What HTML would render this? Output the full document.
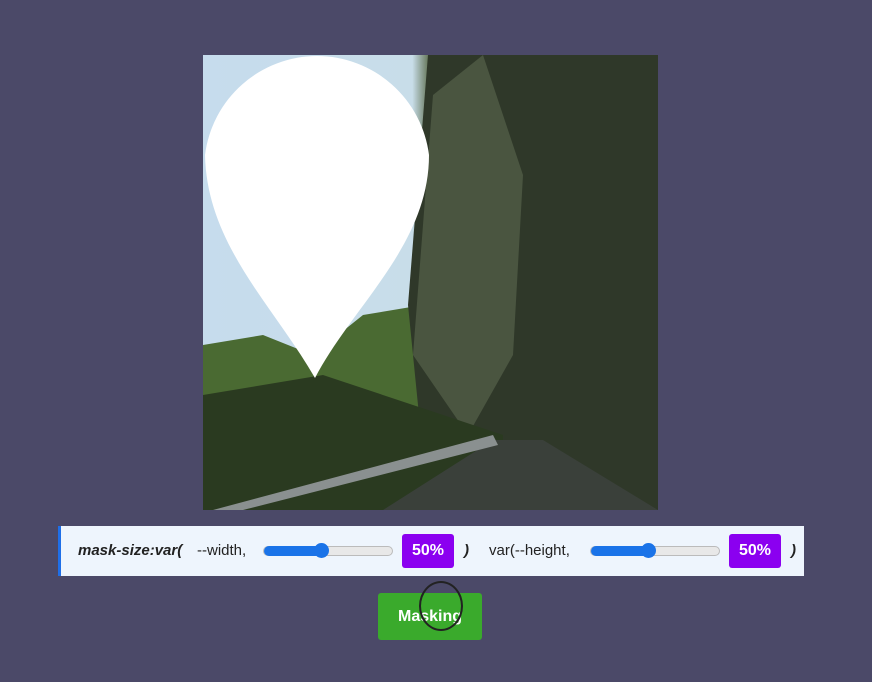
<!DOCTYPE html>
<html><head><style>
body{margin:0;width:872px;height:682px;background:#4b4968;position:relative;overflow:hidden;font-family:"Liberation Sans",sans-serif}
#img{position:absolute;left:203px;top:55px;width:455px;height:455px;overflow:hidden;
background:linear-gradient(90deg,#c6dced 0%,#c8dde9 46%,#5a6a48 50%,#3a4430 60%,#2c3326 100%)}
.p{position:absolute;left:58px;top:526px;width:743px;height:50px;background:#eef5fd;border-left:3px solid #1f6fe8;font-size:15px;color:#222}
.t{position:absolute;top:16px}
.sl{position:absolute;top:20px;height:8px;border-radius:5px;border:1px solid #bbb;background:#e8e8e8;width:128px}
.sl b{position:absolute;left:0;top:-1px;height:10px;width:58px;background:#1a73e8;border-radius:5px}
.sl i{position:absolute;left:50px;top:-4px;width:15px;height:15px;border-radius:50%;background:#1a73e8}
.v{position:absolute;top:8px;width:52px;height:34px;background:#8b00f0;border-radius:3px;color:#fff;font-weight:bold;font-size:16px;text-align:center;line-height:34px}
.btn{position:absolute;left:378px;top:593px;width:104px;height:47px;background:#3aaa2c;border-radius:3px;color:#fff;font-weight:bold;font-size:16px;text-align:center;line-height:47px}
</style></head><body>
<div id="img">
<svg width="455" height="455" style="position:absolute;left:0;top:0">
<polygon points="0,290 60,280 110,300 160,260 220,250 220,455 0,455" fill="#4a6a32"/>
<polygon points="225,0 455,0 455,455 220,400 205,250" fill="#2f3829"/>
<polygon points="230,40 280,0 320,120 310,300 265,380 210,300" fill="#4a5540"/>
<polygon points="0,340 120,320 240,360 300,380 300,455 0,455" fill="#2a3a20"/>
<polygon points="180,455 290,385 340,385 455,455" fill="#3a403a"/>
<polygon points="10,455 290,380 295,390 40,455" fill="#8a9090"/>
<path d="M114,1 A113,113 0 0 0 2,100 C4,190 70,250 112,323 C150,250 226,190 226,100 A113,113 0 0 0 114,1Z" fill="#fff"/>
</svg>
</div>
<div class="p">
<span class="t" style="left:17px;font-style:italic;font-weight:bold">mask-size:var(</span>
<span class="t" style="left:136px">--width,</span>
<div class="sl" style="left:202px"><b></b><i></i></div>
<div class="v" style="left:341px">50%</div>
<span class="t" style="left:403px;font-style:italic;font-weight:bold">)</span>
<span class="t" style="left:428px">var(--height,</span>
<div class="sl" style="left:529px"><b></b><i></i></div>
<div class="v" style="left:668px">50%</div>
<span class="t" style="left:730px;font-style:italic;font-weight:bold">)</span>
</div>
<div class="btn">Masking</div>
<div style="position:absolute;left:419px;top:581px;width:40px;height:46px;border:2px solid #222;border-radius:50%"></div>
</body></html>
